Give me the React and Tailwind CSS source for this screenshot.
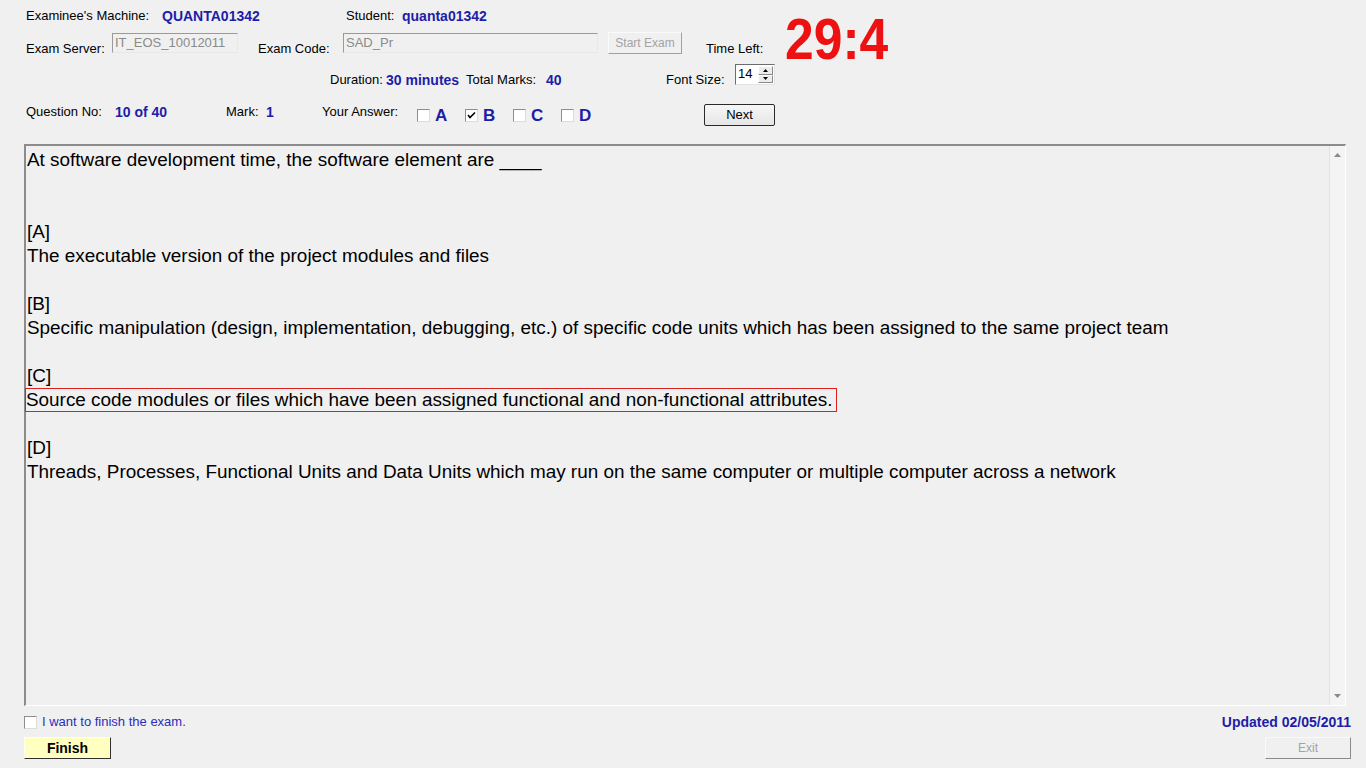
import React from "react";

const Label = ({ children, className = "" }) => (
  <div className={`text-[13px] leading-[16px] text-black whitespace-nowrap ${className}`}>{children}</div>
);
const Val = ({ children, className = "" }) => (
  <div className={`text-[14px] leading-[16px] font-bold text-[#1d1da8] whitespace-nowrap ${className}`}>{children}</div>
);

const Check = ({ checked }) => (
  <div className="w-[13px] h-[13px] bg-white border border-t-[#8d8d8d] border-l-[#8d8d8d] border-b-[#dcdcdc] border-r-[#dcdcdc] flex items-center justify-center shrink-0">
    {checked && (
      <svg width="9" height="9" viewBox="0 0 9 9">
        <path d="M1 4 L3 6.5 L8 1.5" stroke="#000" strokeWidth="1.6" fill="none" />
      </svg>
    )}
  </div>
);

const Line = ({ children }) => (
  <div className="h-[24px] leading-[24px] whitespace-nowrap">{children}</div>
);

export default function App() {
  return (
    <div className="w-[1366px] h-[768px] bg-[#f0f0f0] font-['Liberation_Sans',Arial,sans-serif] overflow-hidden flex flex-col">
      {/* Header top (rows 1-2 + timer) */}
      <div className="flex h-[64px] shrink-0">
        <div className="w-[785px] flex flex-col">
          <div className="flex pt-[8px] pl-[26px] h-[24px]">
            <Label className="w-[136px]">Examinee's Machine:</Label>
            <Val className="w-[184px]">QUANTA01342</Val>
            <Label className="w-[56px]">Student:</Label>
            <Val>quanta01342</Val>
          </div>
          <div className="flex items-start pl-[26px] mt-[8px] h-[24px]">
            <Label className="w-[86px] mt-[9px]">Exam Server:</Label>
            <div className="w-[126px] h-[20px] mt-[1px] border border-t-[#9a9a9a] border-l-[#9a9a9a] border-b-[#e8e8e8] border-r-[#e8e8e8] bg-[#f0f0f0] text-[13px] leading-[16px] text-[#8a8a8a] pl-[2px] pt-[1px] whitespace-nowrap">IT_EOS_10012011</div>
            <Label className="ml-[20px] w-[85px] mt-[9px]">Exam Code:</Label>
            <div className="w-[255px] h-[20px] mt-[1px] border border-t-[#9a9a9a] border-l-[#9a9a9a] border-b-[#e8e8e8] border-r-[#e8e8e8] bg-[#f0f0f0] text-[13px] leading-[16px] text-[#8a8a8a] pl-[2px] pt-[1px] whitespace-nowrap">SAD_Pr</div>
            <div className="ml-[10px] w-[74px] h-[22px] border border-t-[#fafafa] border-l-[#fafafa] border-b-[#a0a0a0] border-r-[#a0a0a0] bg-[#f0f0f0] text-[12px] leading-[20px] text-[#a3a3a3] text-center">Start Exam</div>
            <Label className="ml-[24px] mt-[9px]">Time Left:</Label>
          </div>
        </div>
        <div className="mt-[10px] h-[54px]">
          <div className="inline-block origin-left scale-x-[0.89] text-[58px] leading-[58px] font-bold text-[#ee1111] whitespace-nowrap">29:4</div>
        </div>
      </div>

      {/* Row 3 */}
      <div className="flex items-start pl-[330px] h-[22px] shrink-0">
        <Label className="w-[56px] mt-[8px]">Duration:</Label>
        <Val className="w-[80px] mt-[8px]">30 minutes</Val>
        <Label className="w-[80px] mt-[8px]">Total Marks:</Label>
        <Val className="w-[120px] mt-[8px]">40</Val>
        <Label className="w-[69px] mt-[8px]">Font Size:</Label>
        <div className="w-[40px] h-[21px] bg-white border border-t-[#6d6d6d] border-l-[#6d6d6d] border-b-[#e3e3e3] border-r-[#e3e3e3] flex">
          <div className="flex-1 text-[13px] leading-[16px] pl-[2px] pt-[1px] text-black">14</div>
          <div className="w-[16px] flex flex-col py-[1px] pr-[1px]">
            <div className="flex-1 bg-[#ececec] border border-t-white border-l-white border-b-[#8a8a8a] border-r-[#8a8a8a] flex items-center justify-center">
              <svg width="5" height="3" viewBox="0 0 5 3"><path d="M0 3 L2.5 0 L5 3Z" fill="#000" /></svg>
            </div>
            <div className="flex-1 bg-[#ececec] border border-t-white border-l-white border-b-[#8a8a8a] border-r-[#8a8a8a] flex items-center justify-center">
              <svg width="5" height="3" viewBox="0 0 5 3"><path d="M0 0 L2.5 3 L5 0Z" fill="#000" /></svg>
            </div>
          </div>
        </div>
      </div>

      {/* Row 4 */}
      <div className="flex items-start pl-[26px] mt-[18px] h-[22px] shrink-0">
        <Label className="w-[89px]">Question No:</Label>
        <Val className="w-[111px]">10 of 40</Val>
        <Label className="w-[40px]">Mark:</Label>
        <Val className="w-[56px]">1</Val>
        <Label className="w-[95px]">Your Answer:</Label>
        {[["A", false], ["B", true], ["C", false], ["D", false]].map(([l, c]) => (
          <div key={l} className="w-[48px] flex items-start">
            <div className="mt-[5px]"><Check checked={c} /></div>
            <div className="ml-[5px] mt-[2px] text-[17px] leading-[20px] font-bold text-[#1d1da8]">{l}</div>
          </div>
        ))}
        <div className="ml-[95px] w-[71px] h-[22px] border border-[#2a2a2a] rounded-[2px] bg-gradient-to-b from-[#f6f6f6] to-[#e6e6e6] text-[13px] leading-[20px] text-black text-center">Next</div>
      </div>

      {/* Main question box */}
      <div className="ml-[24px] mt-[18px] w-[1322px] h-[562px] shrink-0 flex border-t-2 border-l-2 border-t-[#8c8c8c] border-l-[#8c8c8c] border-b border-r border-b-white border-r-white bg-[#f0f0f0]">
        <div className="flex-1 pt-[2px] pl-[1px] text-[18.9px] text-black">
          <Line>At software development time, the software element are ____</Line>
          <Line></Line>
          <Line></Line>
          <Line>[A]</Line>
          <Line>The executable version of the project modules and files</Line>
          <Line></Line>
          <Line>[B]</Line>
          <Line>Specific manipulation (design, implementation, debugging, etc.) of specific code units which has been assigned to the same project team</Line>
          <Line></Line>
          <Line>[C]</Line>
          <div className="h-[24px] leading-[24px] whitespace-nowrap w-fit -ml-[2px] pl-[1px] pr-[4px] shadow-[inset_0_0_0_1px_#dd2020]">Source code modules or files which have been assigned functional and non-functional attributes.</div>
          <Line></Line>
          <Line>[D]</Line>
          <Line>Threads, Processes, Functional Units and Data Units which may run on the same computer or multiple computer across a network</Line>
        </div>
        <div className="w-[16px] border-l border-l-[#e2e2e2] bg-[#f4f4f4] flex flex-col justify-between items-center py-[7px]">
          <svg width="7" height="4" viewBox="0 0 7 4"><path d="M0 4 L3.5 0 L7 4Z" fill="#8a8a8a" /></svg>
          <svg width="7" height="4" viewBox="0 0 7 4"><path d="M0 0 L3.5 4 L7 0Z" fill="#8a8a8a" /></svg>
        </div>
      </div>

      {/* Bottom */}
      <div className="flex items-center justify-between pl-[24px] pr-[15px] mt-[8px] h-[16px] shrink-0">
        <div className="flex items-center">
          <Check checked={false} />
          <div className="ml-[5px] text-[13px] leading-[16px] text-[#2d2dbb] whitespace-nowrap">I want to finish the exam.</div>
        </div>
        <Val>Updated 02/05/2011</Val>
      </div>
      <div className="flex justify-between pl-[24px] pr-[15px] mt-[7px] h-[22px] shrink-0">
        <div className="w-[87px] h-[22px] bg-[#ffffc0] border border-t-[#fffff0] border-l-[#fffff0] border-b-[#303030] border-r-[#303030] text-[14px] leading-[20px] font-bold text-black text-center">Finish</div>
        <div className="w-[86px] h-[22px] bg-[#f0f0f0] border border-t-[#fafafa] border-l-[#fafafa] border-b-[#8a8a8a] border-r-[#8a8a8a] text-[12px] leading-[20px] text-[#a3a3a3] text-center">Exit</div>
      </div>
    </div>
  );
}
